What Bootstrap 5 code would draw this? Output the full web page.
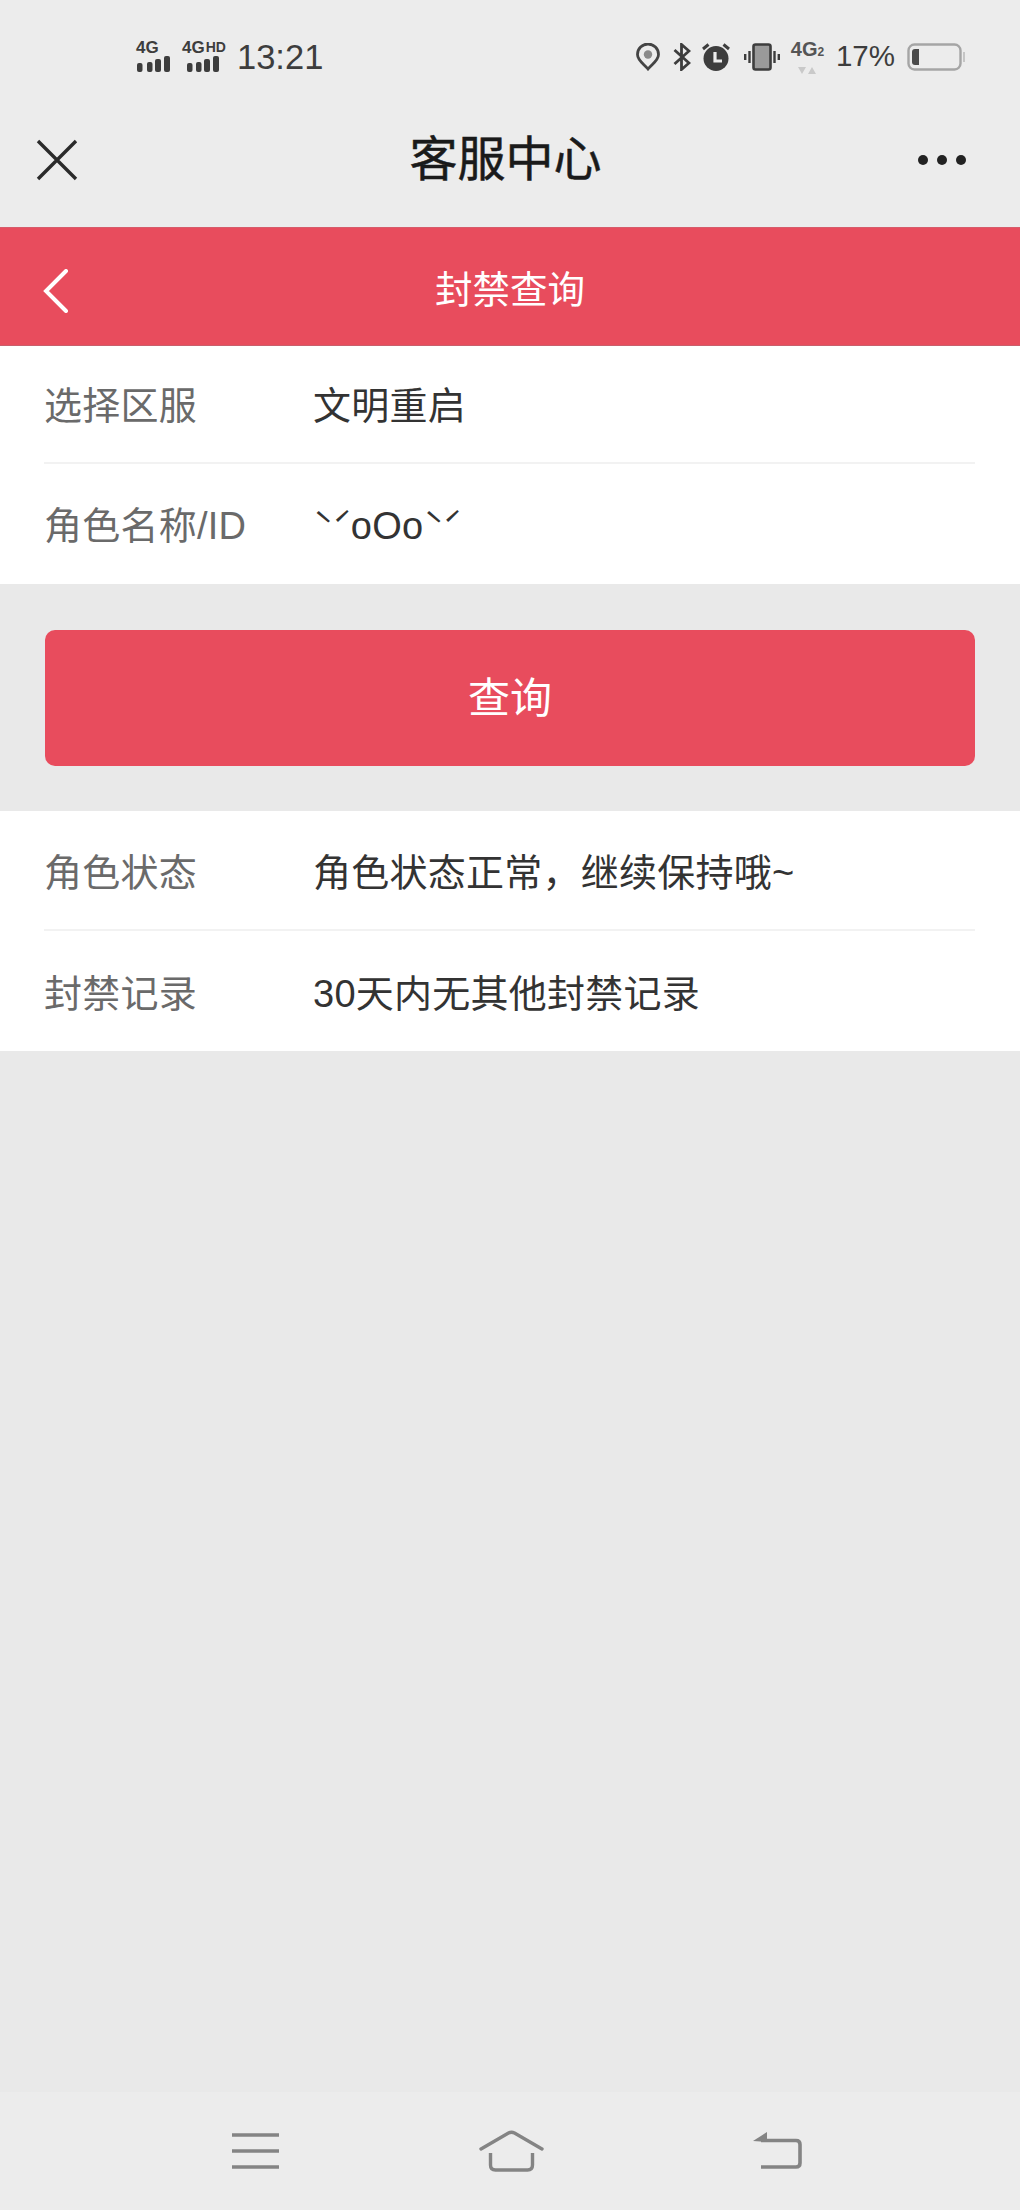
<!DOCTYPE html>
<html lang="zh-CN">
<head>
    <meta charset="UTF-8">
    <meta name="viewport" content="width=device-width, initial-scale=1.0">
    <title>封禁查询</title>
    <link rel="stylesheet" href="https://cdn.jsdelivr.net/npm/bootstrap@5.3.3/dist/css/bootstrap.min.css">
    <style>
        body {
            background: #e9e9e9;
            font-family: "Liberation Sans", "Noto Sans CJK SC", sans-serif;
            height: 2210px;
            overflow: hidden;
        }
        .phone-page { height: 2210px; }
        .status-bar { height: 113px; background: #ececec; padding: 0 55px 0 136px; color: #3d3d3d; }
        .status-bar svg { flex-shrink: 0; }
        .clock { font-size: 34.5px; margin-left: 11px; padding-top: 2px; }
        .sig-box { width: 36px; }
        .sig-box.wide { width: 44px; margin-left: 10px; }
        .sig-label { font-size: 17px; font-weight: 700; line-height: 14px; white-space: nowrap; margin-bottom: 1px; }
        .sig-label .hd-mark { font-size: 14px; position: relative; top: -1px; margin-left: 1px; }
        .net-box { width: 33px; margin-left: 11px; }
        .net-label { font-size: 20px; font-weight: 700; line-height: 20px; color: #555; white-space: nowrap; }
        .net-label .sim-mark { font-size: 12px; }
        .percent { font-size: 29.5px; margin-left: 12px; }
        .ic-bt { margin-left: 13px; }
        .ic-alarm { margin-left: 11px; }
        .ic-vib { margin-left: 14px; }
        .ic-batt { margin-left: 12px; }
        .title-bar { height: 114px; background: #ececec; padding: 0 53px 20px 36px; }
        .title-text { font-size: 48px; color: #1a1a1a; font-weight: 400; line-height: 1; margin-left: 16px; -webkit-text-stroke: .5px #1a1a1a; }
        .red-bar { height: 119px; background: #e84c5d; color: #fff; padding: 8px 0 0 42px; border-top: 1px solid #d65c6b; border-bottom: 1px solid #c95f6c; }
        .red-bar svg { flex-shrink: 0; }
        .red-spacer { width: 70px; flex-shrink: 0; }
        .red-title { font-size: 37.5px; line-height: 1; }
        .info-block { background: #fff; }
        .info-row { margin-left: 44px; margin-right: 45px; padding-top: 5px; display: flex; align-items: center; font-size: 38px; letter-spacing: .25px; color: #333; }
        .row-top { height: 118px; border-bottom: 2px solid #f2f2f2; }
        .row-low { height: 120px; }
        .row-top.tall { height: 120px; padding-top: 6px; }
        .row-low.tall { height: 120px; padding-top: 6px; }
        .row-label { width: 269px; color: #6a6a6a; flex-shrink: 0; }
        .tone { font-family: "Noto Sans CJK SC", sans-serif; font-size: 34px; letter-spacing: -1.5px; }
        .query-wrap { padding: 46px 45px 45px; }
        .query-btn { background: #e84c5d; height: 136px; font-size: 42px; color: #fff; width: 100%; border: 0; border-radius: 10px; }
        .bottom-nav { height: 118px; background: #ececec; padding: 0 0 0 232px; }
        .bottom-nav svg { flex-shrink: 0; }
        .nav-home { margin-left: 200px; }
        .nav-back { margin-left: 209px; }
    </style>
</head>
<body>
<div class="phone-page d-flex flex-column">

    <div class="status-bar d-flex align-items-center justify-content-between">
        <div class="d-flex align-items-center">
            <div class="sig-box">
                <div class="sig-label">4G</div>
                <svg width="34" height="16" viewBox="0 0 34 16" class="d-block"><g fill="#3d3d3d"><rect x="1" y="7" width="5.5" height="9" rx="2"/><rect x="11" y="6" width="5.5" height="10" rx="2"/><rect x="19" y="3" width="6" height="13" rx="2"/><rect x="28" y="0" width="6" height="16" rx="2"/></g></svg>
            </div>
            <div class="sig-box wide">
                <div class="sig-label">4G<span class="hd-mark">HD</span></div>
                <svg width="38" height="16" viewBox="0 0 38 16" class="d-block"><g fill="#3d3d3d"><rect x="5" y="7" width="5.5" height="9" rx="2"/><rect x="14" y="6" width="5.5" height="10" rx="2"/><rect x="22" y="3" width="6" height="13" rx="2"/><rect x="31" y="0" width="6" height="16" rx="2"/></g></svg>
            </div>
            <span class="clock">13:21</span>
        </div>
        <div class="d-flex align-items-center">
            <svg width="24" height="28" viewBox="0 0 24 28"><path d="M12 26 C8 21 1.500 17.500 1.500 11.500 A10.500 10.500 0 0 1 22.500 11.500 C22.500 17.500 16 21 12 26Z" fill="none" stroke="#444" stroke-width="2.800"/><circle cx="12" cy="11.500" r="4.200" fill="#8a8a8a"/></svg>
            <svg class="ic-bt" width="18" height="28" viewBox="0 0 18 28"><path d="M1.500 7 L16 20 L8.500 26.500 V1.500 L16 8 L1.500 21" fill="none" stroke="#3d3d3d" stroke-width="2.800"/></svg>
            <svg class="ic-alarm" width="28" height="28" viewBox="0 0 28 28"><circle cx="14" cy="15.500" r="12.500" fill="#3d3d3d"/><path d="M1 6 L6.500 1.500 M27 6 L21.500 1.500" stroke="#3d3d3d" stroke-width="3"/><path d="M13 9 V18 H20" fill="none" stroke="#ececec" stroke-width="3.200"/></svg>
            <svg class="ic-vib" width="36" height="28" viewBox="0 0 36 28"><rect x="9.500" y="1.500" width="17" height="25" rx="2" fill="#9a9a9a" stroke="#3d3d3d" stroke-width="2.600"/><path d="M5.500 8 V20 M1.200 11 V17 M30.500 8 V20 M34.800 11 V17" stroke="#3d3d3d" stroke-width="2.400"/></svg>
            <div class="net-box d-flex flex-column align-items-center">
                <div class="net-label">4G<span class="sim-mark">2</span></div>
                <svg width="18" height="9" viewBox="0 0 18 9" class="d-block mt-1"><path d="M0 1 H8 L4 8Z M10 8 H18 L14 1Z" fill="#c9c9c9"/></svg>
            </div>
            <span class="percent">17%</span>
            <svg class="ic-batt" width="58" height="28" viewBox="0 0 58 28"><rect x="1.500" y="1.500" width="52" height="25" rx="6" fill="none" stroke="#a5a5a5" stroke-width="2.400"/><path d="M5 9 Q5 6 8 6 H12 V22 H8 Q5 22 5 19Z" fill="#4a4a4a"/><rect x="56" y="9" width="2" height="10" fill="#c5c5c5"/></svg>
        </div>
    </div>

    <div class="title-bar d-flex align-items-center justify-content-between">
        <svg width="42" height="42" viewBox="0 0 42 42"><path d="M2 2 L40 40 M40 2 L2 40" stroke="#2a2a2a" stroke-width="3.400"/></svg>
        <div class="title-text">客服中心</div>
        <svg width="50" height="12" viewBox="0 0 50 12"><g fill="#222"><circle cx="6" cy="6" r="5"/><circle cx="25" cy="6" r="5"/><circle cx="44" cy="6" r="5"/></g></svg>
    </div>

    <div class="red-bar d-flex align-items-center">
        <svg width="28" height="44" viewBox="0 0 28 44"><path d="M24 2 L4 22 L24 42" fill="none" stroke="#fff" stroke-width="4" stroke-linecap="round"/></svg>
        <div class="red-title flex-grow-1 text-center">封禁查询</div>
        <div class="red-spacer"></div>
    </div>

    <div class="info-block">
        <div class="info-row row-top"><span class="row-label">选择区服</span><span>文明重启</span></div>
        <div class="info-row row-low"><span class="row-label">角色名称/ID</span><span><span class="tone">ˋˊ</span>oOo<span class="tone">ˋˊ</span></span></div>
    </div>

    <div class="query-wrap">
        <button type="button" class="btn query-btn">查询</button>
    </div>

    <div class="info-block">
        <div class="info-row row-top tall"><span class="row-label">角色状态</span><span>角色状态正常，继续保持哦~</span></div>
        <div class="info-row row-low tall"><span class="row-label">封禁记录</span><span>30天内无其他封禁记录</span></div>
    </div>

    <div class="flex-grow-1"></div>

    <div class="bottom-nav d-flex align-items-center">
        <svg width="47" height="36" viewBox="0 0 47 36"><path d="M0 2 H47 M0 18 H47 M0 34 H47" stroke="#848484" stroke-width="3.600"/></svg>
        <svg class="nav-home" width="65" height="42" viewBox="0 0 65 42"><path d="M2 19 L29.500 3 Q32.500 1.500 35.500 3 L63 19" fill="none" stroke="#848484" stroke-width="3.400" stroke-linecap="round"/><path d="M11.500 23 V35 Q11.500 40 16.500 40 H48.500 Q53.500 40 53.500 35 V23" fill="none" stroke="#848484" stroke-width="3.400"/></svg>
        <svg class="nav-back" width="49" height="40" viewBox="0 0 49 40"><path d="M0 10 L14 1 V11Z" fill="#848484"/><path d="M8 9.500 H43 Q47 9.500 47 13.500 V32 Q47 36 43 36 H8" fill="none" stroke="#848484" stroke-width="3.600"/></svg>
    </div>
</div>
<script src="https://cdn.jsdelivr.net/npm/bootstrap@5.3.3/dist/js/bootstrap.bundle.min.js"></script>
</body>
</html>
